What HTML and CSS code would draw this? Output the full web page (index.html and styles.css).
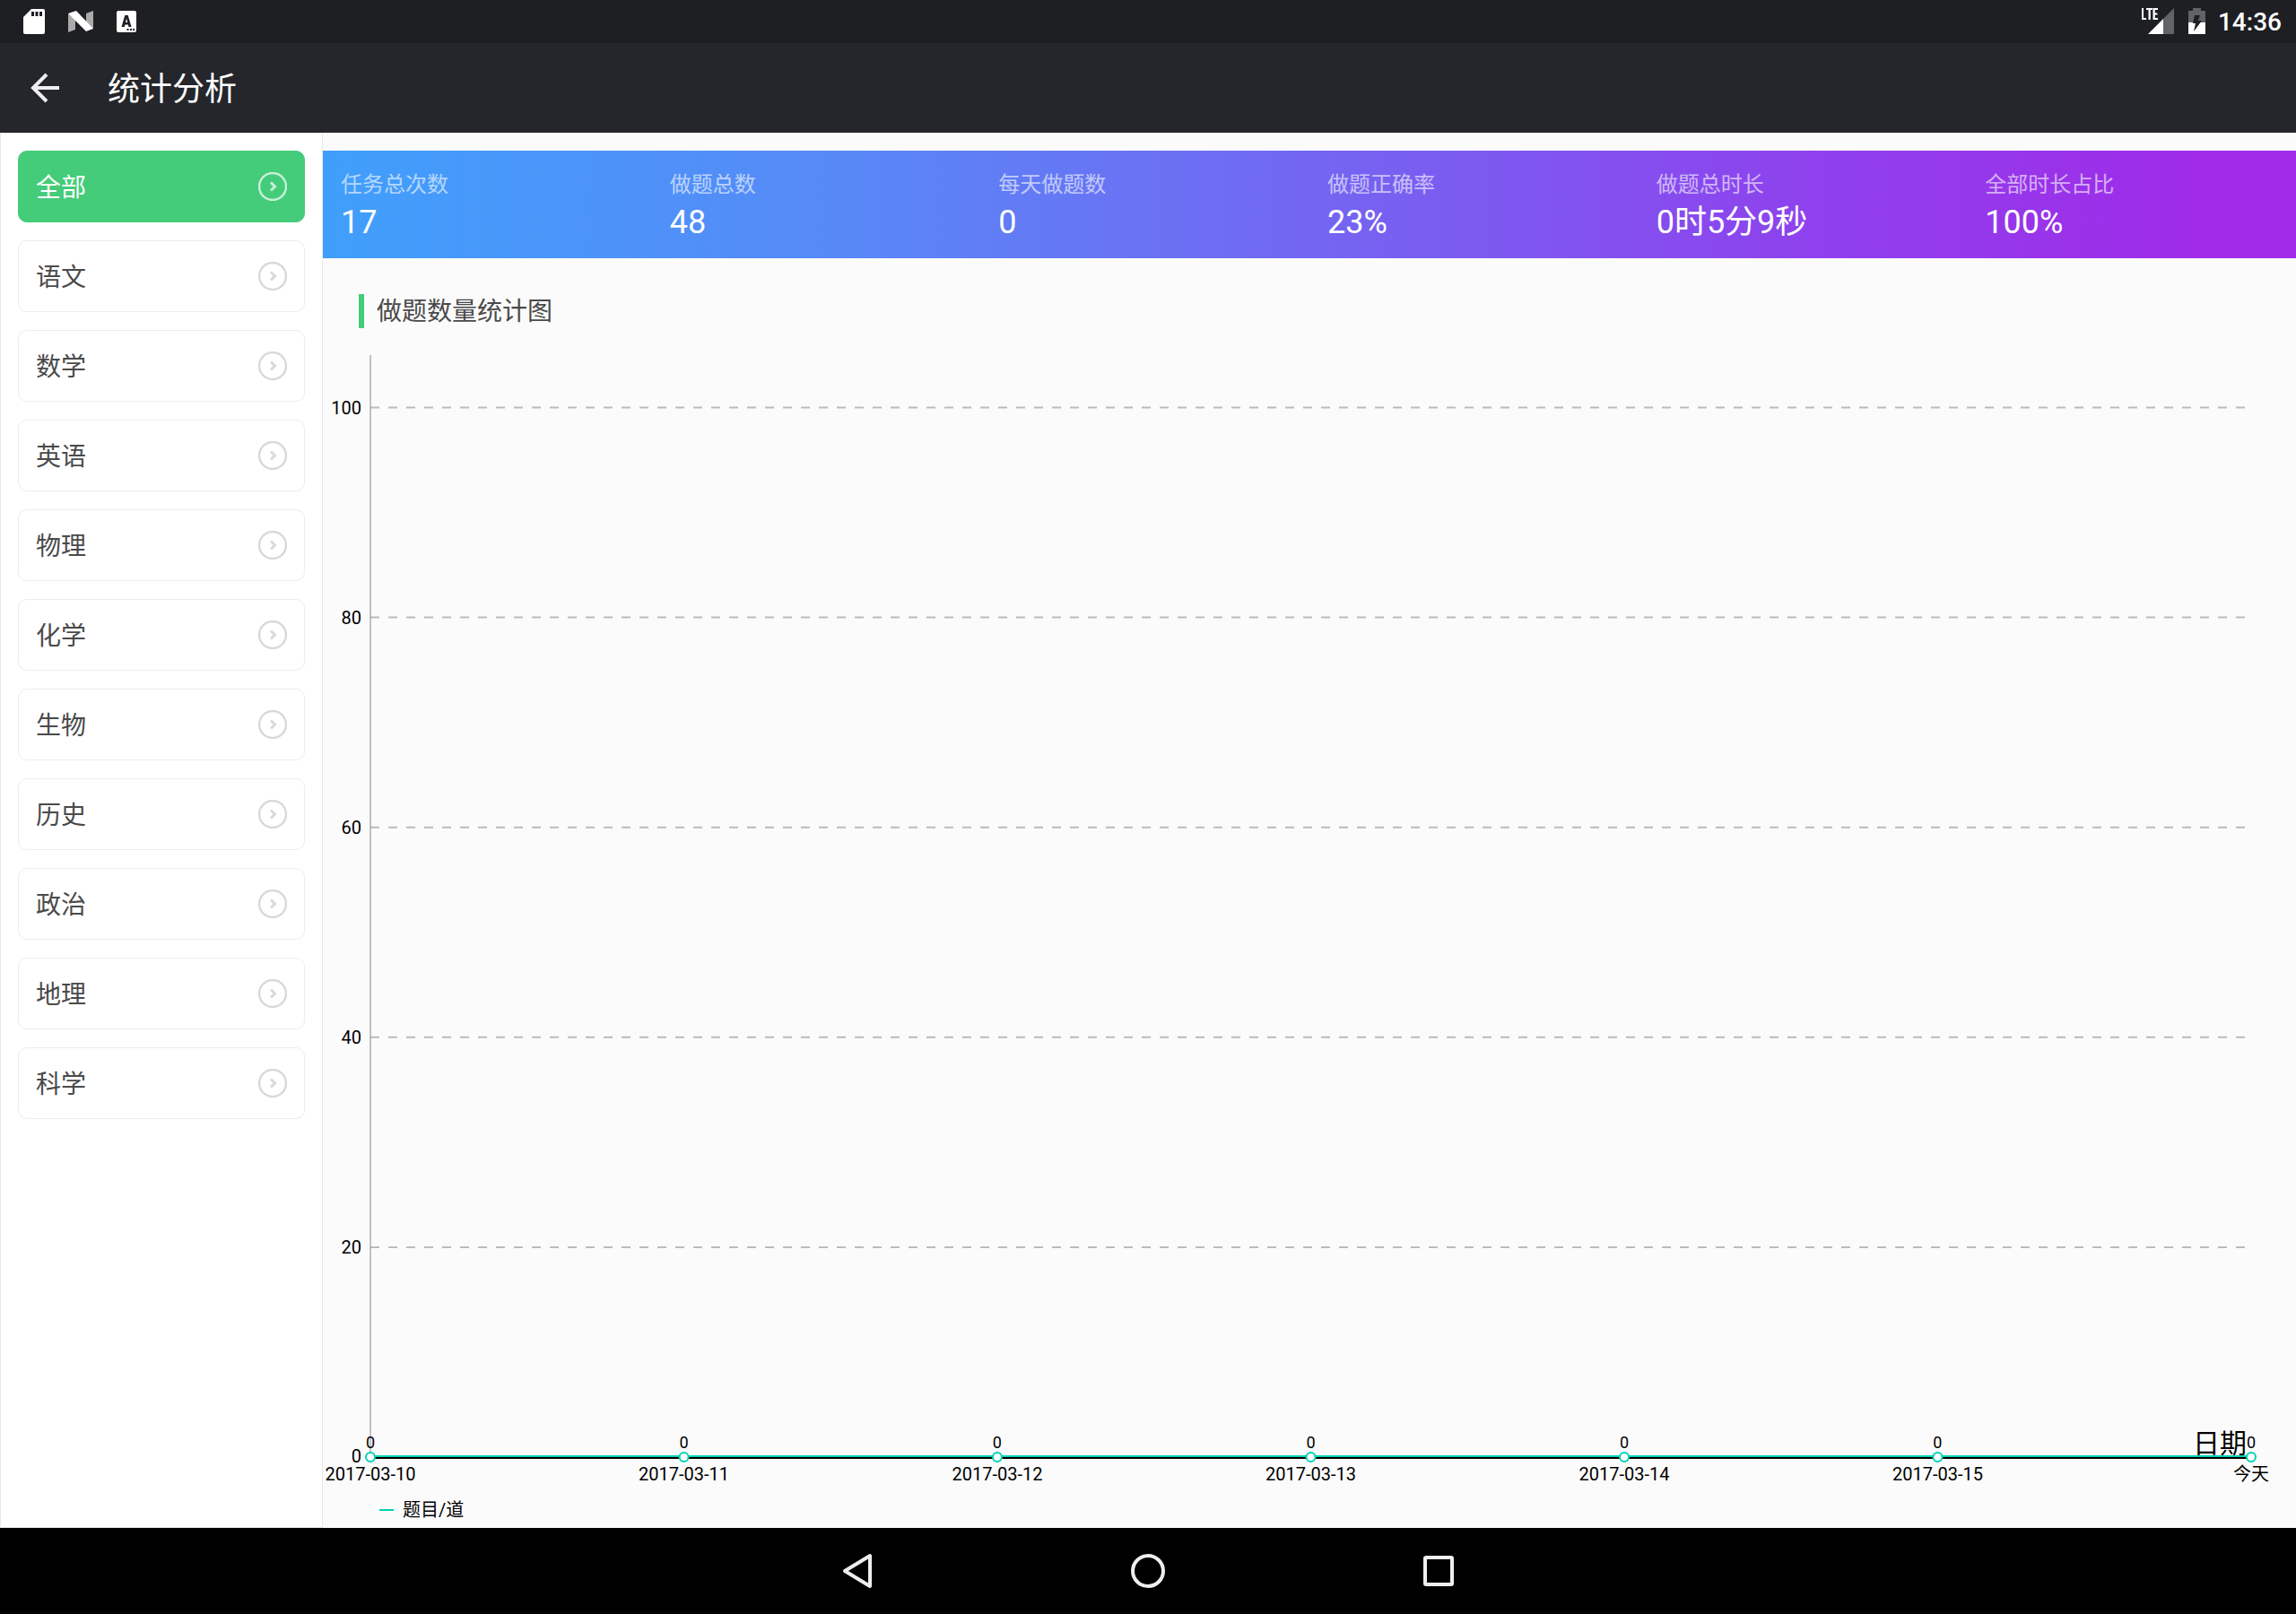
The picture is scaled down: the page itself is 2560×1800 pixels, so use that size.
FILE: index.html
```html
<!DOCTYPE html>
<html lang="zh-CN">
<head>
<meta charset="utf-8">
<meta name="viewport" content="width=device-width, initial-scale=1">
<title>统计分析</title>
<link rel="stylesheet" href="styles.css">
</head>
<body>
<svg class="defs" aria-hidden="true">
  <symbol id="go" viewBox="0 0 32 32">
    <circle cx="16" cy="16" r="15" fill="none" stroke="currentColor" stroke-width="2.500"/>
    <path d="M14 11.500 18.500 16l-4.500 4.500" fill="none" stroke="currentColor" stroke-width="3"/>
  </symbol>
</svg>

<div class="status">
  <div class="status-group notices">
    <svg width="24" height="28" viewBox="0 0 24 28"><path fill="#fff" fill-rule="evenodd" d="M9 0H22a2 2 0 0 1 2 2V26a2 2 0 0 1-2 2H2a2 2 0 0 1-2-2V9ZM9 3v5h3V3ZM13.500 3v5h3V3ZM18 3v5h3V3Z"/></svg>
    <svg width="28" height="24" viewBox="0 0 28 24"><path fill="#aaa" d="M0 3 8 10V21L0 24ZM28 0V20L20 14V3Z"/><path fill="#fff" d="M0 3 9 0 28 20 20 23Z"/></svg>
    <svg width="22" height="24" viewBox="0 0 22 24"><path fill="#fff" fill-rule="evenodd" d="M2 0H20a2 2 0 0 1 2 2V22a2 2 0 0 1-2 2H2a2 2 0 0 1-2-2V2A2 2 0 0 1 2 0ZM9.300 5 5.500 18H8.700L9.500 15.500H12.800L13.500 18H16.500L12.700 5ZM11 8.500 12.200 13H10ZM11.500 20v2h2v-2ZM15 20v2h2v-2ZM18 20v2h2v-2Z"/></svg>
  </div>
  <div class="status-group">
    <svg width="36" height="30" viewBox="0 0 36 30"><path fill="#626367" d="M36 0V29H24V12Z"/><path fill="#fff" d="M24 12V29H7ZM0 0H2V11H5V13H0ZM5 0H12V2H9.800V13H7.500V2H5ZM12.500 0H18V2H14.800V5.500H17.500V7.500H14.800V11H18V13H12.500Z"/></svg>
    <svg class="battery" width="19" height="30" viewBox="0 0 19 30"><path fill="#626367" d="M5 0H14V3H19V16H0V3H5Z"/><path fill="#fff" d="M0 16H19V29H0Z"/><path fill="#1e1f23" d="M7 8H13L11 14H15L6 26 8 17H5Z"/></svg>
    <time class="clock">14:36</time>
  </div>
</div>

<header class="appbar">
  <button class="back" aria-label="返回"><svg width="34" height="34" viewBox="0 0 34 34"><path d="M32 17H4M18 2 3 17 18 32" fill="none" stroke="#eee" stroke-width="4"/></svg></button>
  <h1 class="title">统计分析</h1>
</header>

<div class="content">
  <nav class="subjects">
    <button class="subject active">全部<svg class="go"><use href="#go"/></svg></button>
    <button class="subject">语文<svg class="go"><use href="#go"/></svg></button>
    <button class="subject">数学<svg class="go"><use href="#go"/></svg></button>
    <button class="subject">英语<svg class="go"><use href="#go"/></svg></button>
    <button class="subject">物理<svg class="go"><use href="#go"/></svg></button>
    <button class="subject">化学<svg class="go"><use href="#go"/></svg></button>
    <button class="subject">生物<svg class="go"><use href="#go"/></svg></button>
    <button class="subject">历史<svg class="go"><use href="#go"/></svg></button>
    <button class="subject">政治<svg class="go"><use href="#go"/></svg></button>
    <button class="subject">地理<svg class="go"><use href="#go"/></svg></button>
    <button class="subject">科学<svg class="go"><use href="#go"/></svg></button>
  </nav>

  <main class="main">
    <dl class="stats">
      <div class="stat"><dt>任务总次数</dt><dd>17</dd></div>
      <div class="stat"><dt>做题总数</dt><dd>48</dd></div>
      <div class="stat"><dt>每天做题数</dt><dd>0</dd></div>
      <div class="stat"><dt>做题正确率</dt><dd>23%</dd></div>
      <div class="stat"><dt>做题总时长</dt><dd>0时5分9秒</dd></div>
      <div class="stat"><dt>全部时长占比</dt><dd>100%</dd></div>
    </dl>

    <h2 class="chart-title">做题数量统计图</h2>

    <svg class="chart" role="img" aria-label="做题数量统计图">
      <!-- The value axis runs from 0 to 105 -->
      <g class="grid">
        <line x2="100%" y1="4.76%" y2="4.76%"/>
        <line x2="100%" y1="23.81%" y2="23.81%"/>
        <line x2="100%" y1="42.86%" y2="42.86%"/>
        <line x2="100%" y1="61.9%" y2="61.9%"/>
        <line x2="100%" y1="80.95%" y2="80.95%"/>
      </g>
      <line class="y-axis" y2="100%"/>
      <g class="y-labels">
        <text x="-10" y="4.76%" dy="7">100</text>
        <text x="-10" y="23.81%" dy="7">80</text>
        <text x="-10" y="42.86%" dy="7">60</text>
        <text x="-10" y="61.9%" dy="7">40</text>
        <text x="-10" y="80.95%" dy="7">20</text>
        <text x="-10" y="100%" dy="6">0</text>
      </g>
      <text class="axis-name" x="100%" y="100%" dx="-5" dy="-5">日期</text>
      <line class="x-axis" x2="100%" y1="100%" y2="100%"/>
      <svg class="series-layer" y="-1">
        <line class="series" x2="100%" y1="100%" y2="100%"/>
      </svg>
      <g class="values">
        <text x="0%" y="100%" dy="-10">0</text>
        <text x="16.67%" y="100%" dy="-10">0</text>
        <text x="33.33%" y="100%" dy="-10">0</text>
        <text x="50%" y="100%" dy="-10">0</text>
        <text x="66.67%" y="100%" dy="-10">0</text>
        <text x="83.33%" y="100%" dy="-10">0</text>
        <text x="100%" y="100%" dy="-10">0</text>
      </g>
      <g class="dots">
        <circle cx="0%" cy="100%" r="5"/>
        <circle cx="16.67%" cy="100%" r="5"/>
        <circle cx="33.33%" cy="100%" r="5"/>
        <circle cx="50%" cy="100%" r="5"/>
        <circle cx="66.67%" cy="100%" r="5"/>
        <circle cx="83.33%" cy="100%" r="5"/>
        <circle cx="100%" cy="100%" r="5"/>
      </g>
      <g class="dates">
        <text x="0%" y="100%" dy="26">2017-03-10</text>
        <text x="16.67%" y="100%" dy="26">2017-03-11</text>
        <text x="33.33%" y="100%" dy="26">2017-03-12</text>
        <text x="50%" y="100%" dy="26">2017-03-13</text>
        <text x="66.67%" y="100%" dy="26">2017-03-14</text>
        <text x="83.33%" y="100%" dy="26">2017-03-15</text>
        <text x="100%" y="100%" dy="26">今天</text>
      </g>
    </svg>
    <div class="legend"><span class="legend-mark"></span>题目/道</div>
  </main>
</div>

<footer class="navbar">
  <button class="nav-key" aria-label="返回"><svg width="40" height="40" viewBox="0 0 40 40"><path d="M34 3V37L6 20Z"/></svg></button>
  <button class="nav-key" aria-label="主页"><svg width="40" height="40" viewBox="0 0 40 40"><circle cx="20" cy="20" r="17"/></svg></button>
  <button class="nav-key" aria-label="最近任务"><svg width="40" height="40" viewBox="0 0 40 40"><rect x="5" y="5" width="30" height="30" rx="1"/></svg></button>
</footer>
</body>
</html>
```

FILE: styles.css
```css
* { box-sizing: border-box; }

body {
  margin: 0;
  min-height: 100vh;
  display: flex;
  flex-direction: column;
  background: #fbfbfb;
  color: #4a4a4a;
  font-family: Roboto, "Noto Sans CJK SC", sans-serif;
}

button {
  margin: 0;
  padding: 0;
  border: 0;
  background: none;
  color: inherit;
  font: inherit;
}

h1, h2, dl, dd { margin: 0; font-weight: 400; }
svg { display: block; }
.defs { display: none; }

.status {
  height: 48px;
  padding: 0 16px 0 26px;
  display: flex;
  justify-content: space-between;
  align-items: center;
  background: #1e1f23;
  color: #fff;
}
.status-group { display: flex; align-items: center; }
.notices { gap: 26px; }
.battery { margin: 0 14px 0 16px; }
.clock { padding-top: 2px; font-size: 28px; font-weight: 500; line-height: 32px; }

.appbar {
  height: 100px;
  padding: 0 34px;
  display: flex;
  align-items: center;
  gap: 52px;
  background: #25262b;
  color: #fff;
}
.title { padding-top: 4px; font-size: 36px; line-height: 52px; }

.content { flex: 1; display: flex; }

.subjects {
  width: 360px;
  padding: 19px;
  display: flex;
  flex-direction: column;
  gap: 20px;
  background: #fff;
  border: 1px solid #e8e8e8;
}
.subject {
  height: 80px;
  padding: 0 19px 2px;
  display: flex;
  align-items: center;
  justify-content: space-between;
  border: 1px solid #ededed;
  border-radius: 10px;
  font-size: 28px;
}
.go { width: 32px; height: 32px; margin-top: 2px; color: #d9d9d9; }
.active { background: #44cc7a; border-color: #44cc7a; color: #fff; }
.active .go { color: #c8f0d8; }

.main {
  flex: 1;
  min-width: 0;
  padding-top: 20px;
  display: flex;
  flex-direction: column;
}

.stats {
  height: 120px;
  padding-top: 20px;
  display: grid;
  grid-template-columns: repeat(6, 1fr);
  background: linear-gradient(90deg, #409ffb, #568af7 25%, #7366f2 50%, #8e42ed 75%, #a02ae8 96%);
  color: #fff;
}
.stat { padding-left: 20px; }
.stat dt { font-size: 24px; line-height: 36px; opacity: 0.6; }
.stat dd { font-size: 36px; line-height: 48px; }

.chart-title {
  margin: 40px 40px 30px;
  padding: 2px 0 0 14px;
  border-left: 6px solid #44cc7a;
  font-size: 28px;
  line-height: 36px;
}

.chart {
  flex: 1;
  width: auto;
  min-height: 300px;
  margin: 0 50px 0 53px;
  overflow: visible;
  font-size: 20px;
  fill: #000;
}
.grid line { stroke: #bbb; stroke-width: 2; stroke-dasharray: 10 10; }
.y-axis { stroke: #888; stroke-width: 1; }
.x-axis { stroke: #000; stroke-width: 4; }
.series-layer { overflow: visible; }
.series { stroke: #00d2b4; stroke-width: 2; }
.dots circle { fill: #fff; stroke: #00d2b4; stroke-width: 2; }
.y-labels, .axis-name { text-anchor: end; }
.axis-name { font-size: 30px; }
.values, .dates { text-anchor: middle; }
.values { font-size: 18px; }

.legend {
  padding: 44px 0 5px 63px;
  display: flex;
  align-items: center;
  gap: 10px;
  color: #000;
  font-size: 20px;
  line-height: 30px;
}
.legend-mark { width: 16px; height: 2px; background: #00d2b4; }

.navbar {
  height: 96px;
  display: flex;
  justify-content: center;
  align-items: center;
  gap: 284px;
  background: #000;
}
.nav-key svg { fill: none; stroke: #eee; stroke-width: 4; stroke-linejoin: round; }
```
